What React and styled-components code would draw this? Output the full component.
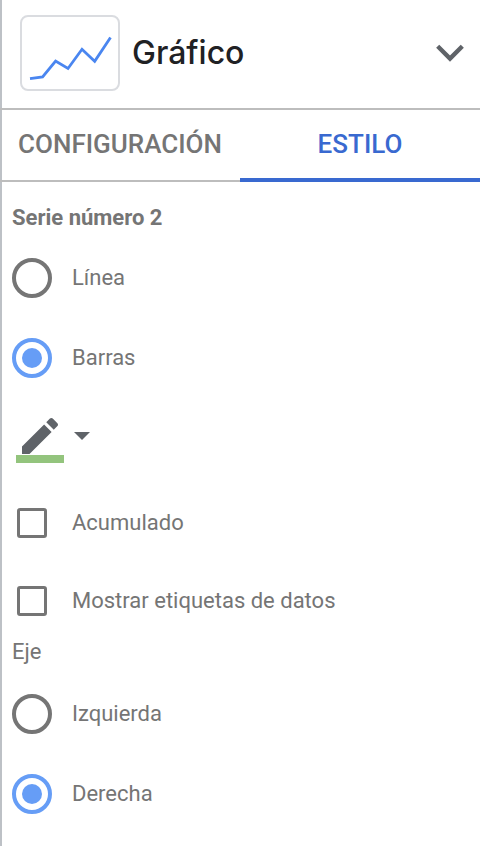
import { useState } from "react"
import styled, { createGlobalStyle } from "styled-components"

const GlobalStyle = createGlobalStyle`
  * {
    box-sizing: border-box;
  }
  body {
    margin: 0;
    background: #fff;
    font-family: Roboto, "Liberation Sans", sans-serif;
  }
`

const RadioOption = ({name, label, value, onChange}) => (
  <Option>
    <Radio
      type='radio'
      name={name}
      value={label}
      checked={value === label}
      onChange={() => onChange(label)}
    />
    <span>{label}</span>
  </Option>
)

const CheckOption = ({label}) => (
  <Option $compact>
    <Check type='checkbox' />
    <span>{label}</span>
  </Option>
)

export default function App() {
  const [tab, setTab] = useState('ESTILO');
  const [series, setSeries] = useState('Barras');
  const [axis, setAxis] = useState('Derecha');

  return(
    <Panel>
      <GlobalStyle />
      <Header>
        <ChartPreview>
          <svg width='96' height='72' viewBox='22 17 96 72' fill='none' aria-hidden='true'>
            <polyline
              points='30,78.7 42.6,77 55.6,61 68,68.5 82,49.3 94.7,61.3 110.5,37.5'
              stroke='#4a86f0'
              strokeWidth='2.8'
            />
          </svg>
        </ChartPreview>
        <Title>Gráfico</Title>
        <Toggle type='button' aria-label='Gráfico'>
          <svg width='28' height='20' viewBox='0 0 28 20' fill='none' aria-hidden='true'>
            <path d='M1.7 3.3 14 15.6 26.3 3.3' stroke='#5f6368' strokeWidth='4.4' />
          </svg>
        </Toggle>
      </Header>

      <Tabs role='tablist'>
        {['CONFIGURACIÓN', 'ESTILO'].map(name => (
          <Tab
            key={name}
            type='button'
            role='tab'
            aria-selected={tab === name}
            $active={tab === name}
            onClick={() => setTab(name)}
          >
            {name}
          </Tab>
        ))}
      </Tabs>

      <Content>
        <Heading>Serie número 2</Heading>
        <RadioOption name='series' label='Línea' value={series} onChange={setSeries} />
        <RadioOption name='series' label='Barras' value={series} onChange={setSeries} />
        <ColorButton type='button' aria-label='Color'>
          <svg width='48' height='52' viewBox='0 0 48 52' aria-hidden='true'>
            <path
              transform='scale(2)'
              fill='#5f6368'
              d='M3 17.25V21h3.75L17.81 9.94l-3.75-3.75L3 17.25zM20.71 7.04c.39-.39.39-1.02 0-1.41l-2.34-2.34c-.39-.39-1.02-.39-1.41 0l-1.83 1.83 3.75 3.75 1.83-1.83z'
            />
            <rect y='43' width='48' height='8' fill='#93c47d' />
          </svg>
          <svg width='16' height='12' viewBox='0 0 16 12' aria-hidden='true'>
            <path d='M0 0h16L8 8z' fill='#5f6368' />
          </svg>
        </ColorButton>
        <CheckOption label='Acumulado' />
        <CheckOption label='Mostrar etiquetas de datos' />
        <Subheading>Eje</Subheading>
        <RadioOption name='axis' label='Izquierda' value={axis} onChange={setAxis} />
        <RadioOption name='axis' label='Derecha' value={axis} onChange={setAxis} />
      </Content>
    </Panel>
  )
}

const Panel = styled.main`
  min-height: 100vh;
  color: #757575;
  box-shadow: inset 2px 0 #bdc1c6;
`
const Header = styled.header`
  display: flex;
  align-items: center;
  padding: 15px 16px 17px 20px;
  border-bottom: 2px solid #bdbdbd;
`
const ChartPreview = styled.div`
  width: 100px;
  height: 76px;
  border: 2px solid #dadce0;
  border-radius: 8px;

  svg {
    display: block;
  }
`
const Title = styled.h1`
  flex: 1;
  margin: 0 0 0 12px;
  font-family: Inter, "Liberation Sans", sans-serif;
  font-size: 32px;
  font-weight: 500;
  line-height: 40px;
  color: #202124;
`
const Toggle = styled.button`
  display: flex;
  padding: 0;
  border: 0;
  background: none;
  cursor: pointer;
`
const Tabs = styled.div`
  display: grid;
  grid-template-columns: 1fr 1fr;
`
const Tab = styled.button`
  height: 72px;
  padding: 0 0 4px;
  border: 0;
  background: none;
  box-shadow: inset 0 ${props => props.$active ? '-4px #3969d0' : '-2px #bdbdbd'};
  color: ${props => props.$active ? '#3969d0' : '#757575'};
  font-family: inherit;
  font-size: 26px;
  font-weight: 500;
  cursor: pointer;
`
const Content = styled.div`
  padding: 20px 12px 12px;
  font-size: 22px;
  line-height: 32px;
`
const Heading = styled.h2`
  margin: 0 0 4px;
  font-size: 22px;
  font-weight: 700;
  line-height: 32px;
`
const Subheading = styled.h3`
  margin: -4px 0 6px;
  font-size: 22px;
  font-weight: 400;
  line-height: 32px;
`
const Option = styled.label`
  display: grid;
  grid-template-columns: 40px 1fr;
  column-gap: 20px;
  align-items: center;
  height: ${props => props.$compact ? '78px' : '80px'};
  cursor: pointer;
`
const Radio = styled.input`
  appearance: none;
  display: grid;
  place-items: center;
  width: 40px;
  height: 40px;
  margin: 0;
  border: 4px solid #757575;
  border-radius: 50%;

  &:checked {
    border-color: #669df6;
  }
  &:checked::before {
    content: '';
    width: 20px;
    height: 20px;
    border-radius: 50%;
    background: #669df6;
  }
`
const Check = styled.input`
  appearance: none;
  justify-self: center;
  width: 30px;
  height: 30px;
  margin: 0;
  border: 3px solid #757575;
  border-radius: 3px;

  &:checked {
    background: #757575;
  }
`
const ColorButton = styled.button`
  display: flex;
  align-items: center;
  gap: 10px;
  height: 86px;
  padding: 0 4px 6px;
  border: 0;
  background: none;
  cursor: pointer;
`
